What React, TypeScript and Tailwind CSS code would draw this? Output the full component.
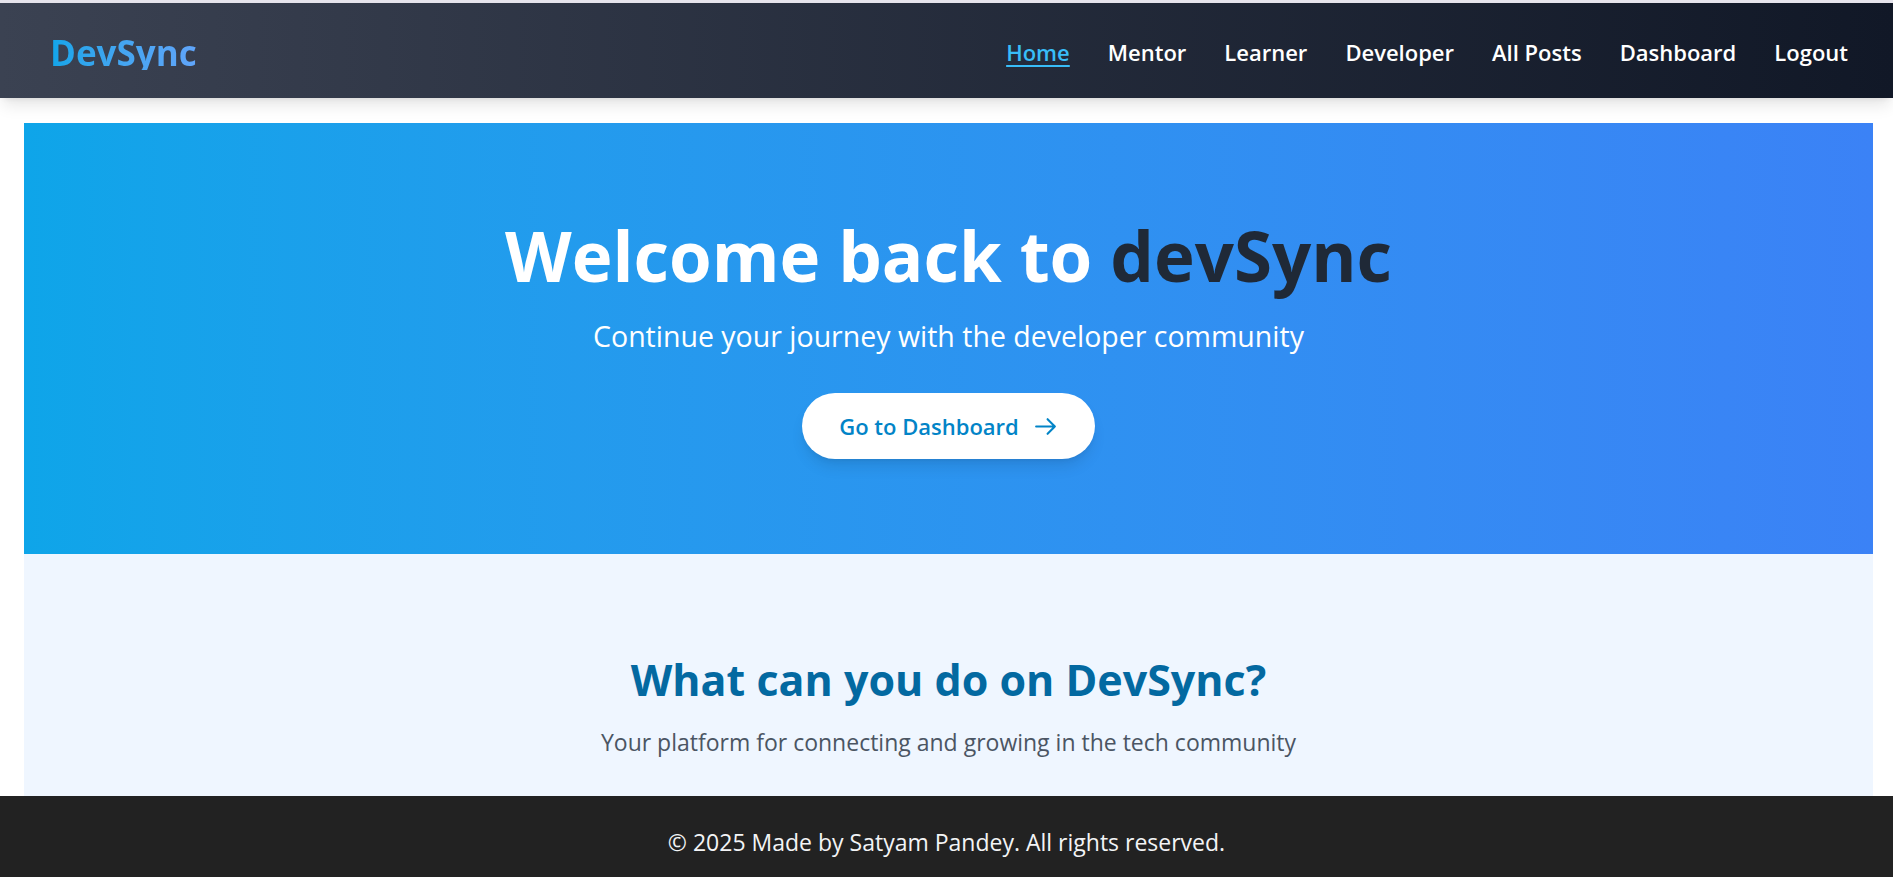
import { useState } from "react";

const links = ["Home", "Mentor", "Learner", "Developer", "All Posts", "Dashboard", "Logout"];

function ArrowIcon() {
  return (
    <svg viewBox="0 0 24 24" fill="none" stroke="currentColor" strokeWidth={2} strokeLinecap="round" strokeLinejoin="round" className="w-[25px] h-[25px]">
      <path d="M14 5l7 7m0 0l-7 7m7-7H3" />
    </svg>
  );
}

export default function App() {
  const [active] = useState("Home");

  return (
    <div className="min-h-screen flex flex-col bg-white" style={{ fontFamily: "'Open Sans', sans-serif" }}>
      <div className="h-[3px] bg-[#e6e4ec]" />

      <nav className="relative z-10 h-[95px] flex items-center justify-between pt-[3px] pl-[50px] pr-[45px] bg-gradient-to-r from-[#3b4252] to-[#111827] shadow-lg">
        <span className="text-[35px] font-bold leading-none bg-gradient-to-r from-[#0ea5e9] to-[#60a5fa] bg-clip-text text-transparent">
          DevSync
        </span>
        <ul className="flex items-center gap-[38px]">
          {links.map((l) => (
            <li key={l}>
              <a
                href="#"
                className={
                  l === active
                    ? "text-[22px] font-semibold text-[#38bdf8] underline underline-offset-4"
                    : "text-[22px] font-semibold text-white"
                }
              >
                {l}
              </a>
            </li>
          ))}
        </ul>
      </nav>

      <main className="flex-1 flex flex-col pt-[25px] ml-[24px] mr-[20px]">
        <section className="h-[431px] flex flex-col items-center pt-[98px] bg-gradient-to-r from-[#0ea5e9] to-[#3b82f6] text-center">
          <h1 className="text-[69px] font-bold leading-none text-white">
            Welcome back to <span className="text-[#1f2937]">devSync</span>
          </h1>
          <p className="mt-[28px] text-[28.5px] leading-[36px] text-white">
            Continue your journey with the developer community
          </p>
          <button className="mt-[39px] h-[66px] px-[37px] flex items-center gap-[14px] rounded-full bg-white text-[#0284c7] text-[22px] font-semibold shadow-lg">
            Go to Dashboard
            <ArrowIcon />
          </button>
        </section>

        <section className="flex-1 flex flex-col items-center pt-[101px] bg-[#eff6ff] text-center">
          <h2 className="text-[43px] leading-[50px] font-bold text-[#0369a1]">What can you do on DevSync?</h2>
          <p className="mt-[21px] text-[23px] leading-[32px] text-[#4b5563]">
            Your platform for connecting and growing in the tech community
          </p>
        </section>
      </main>

      <footer className="h-[81px] flex items-center justify-center pt-[12px] bg-[#222222]">
        <p className="text-[23px] text-gray-100">© 2025 Made by Satyam Pandey. All rights reserved.</p>
      </footer>
    </div>
  );
}
